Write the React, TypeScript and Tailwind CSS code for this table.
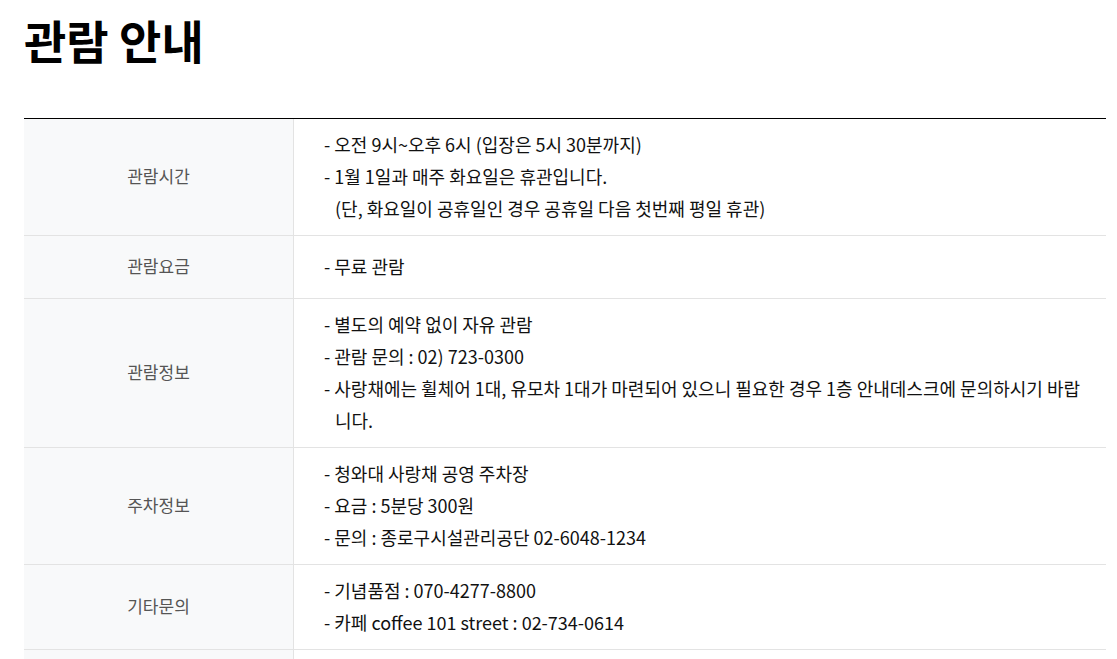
import React from "react";

const rows: { th: string; lines: string[][] }[] = [
  {
    th: "관람시간",
    lines: [
      ["- 오전 9시~오후 6시 (입장은 5시 30분까지)"],
      ["- 1월 1일과 매주 화요일은 휴관입니다.", "(단, 화요일이 공휴일인 경우 공휴일 다음 첫번째 평일 휴관)"],
    ],
  },
  { th: "관람요금", lines: [["- 무료 관람"]] },
  {
    th: "관람정보",
    lines: [
      ["- 별도의 예약 없이 자유 관람"],
      ["- 관람 문의 : 02) 723-0300"],
      ["- 사랑채에는 휠체어 1대, 유모차 1대가 마련되어 있으니 필요한 경우 1층 안내데스크에 문의하시기 바랍니다."],
    ],
  },
  {
    th: "주차정보",
    lines: [
      ["- 청와대 사랑채 공영 주차장"],
      ["- 요금 : 5분당 300원"],
      ["- 문의 : 종로구시설관리공단 02-6048-1234"],
    ],
  },
  {
    th: "기타문의",
    lines: [["- 기념품점 : 070-4277-8800"], ["- 카페 coffee 101 street : 02-734-0614"]],
  },
];

export default function App() {
  return (
    <div
      className="bg-white min-h-screen pl-[24px] pr-[11px] text-black"
      style={{ fontFamily: '"Noto Sans CJK KR", "Noto Sans", sans-serif' }}
    >
      <h1 className="text-[46px] font-bold leading-[60px] pt-[9px]">관람 안내</h1>
      <div className="mt-[49px] border-t border-black">
        {rows.map((r) => (
          <div key={r.th} className="flex border-b border-[#e3e3e3]">
            <div className="w-[270px] shrink-0 bg-[#f8f9fa] border-r border-[#e3e3e3] flex items-center justify-center text-[17px] text-[#555] pt-[19px] pb-[21px] leading-[22px]">
              {r.th}
            </div>
            <div className="flex-1 flex items-center pt-[9px] pb-[11px] pl-[30px] pr-[20px] text-[18px] leading-[32px] text-[#111]">
              <div className="w-full">
                {r.lines.map((l, i) => (
                  <div key={i} className="pl-[11px]">
                    {l.map((s, j) => (
                      <div key={j} className={j === 0 ? "-indent-[11px]" : ""} style={{ textIndent: j === 0 ? -11 : 0 }}>
                        {s}
                      </div>
                    ))}
                  </div>
                ))}
              </div>
            </div>
          </div>
        ))}
        <div className="flex h-[62px]">
          <div className="w-[270px] shrink-0 bg-[#f8f9fa] border-r border-[#e3e3e3]" />
          <div className="flex-1" />
        </div>
      </div>
    </div>
  );
}
